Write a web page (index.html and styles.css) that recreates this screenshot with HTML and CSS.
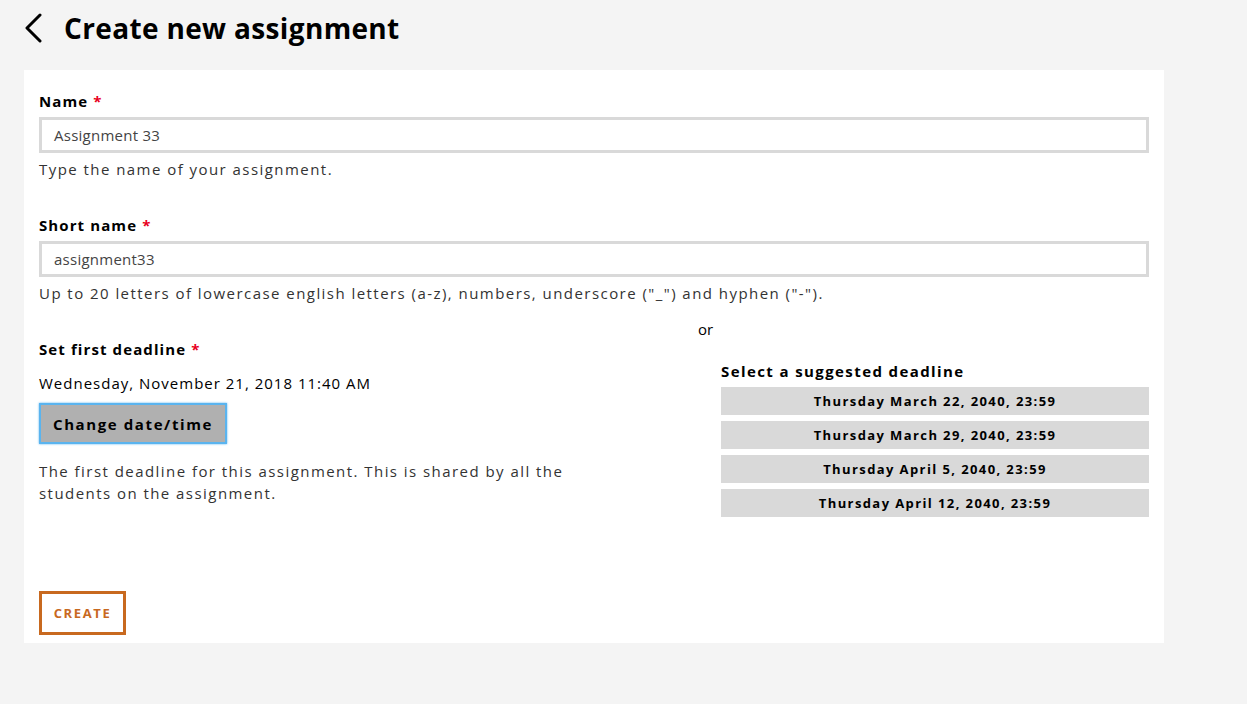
FILE: index.html
```html
<!DOCTYPE html>
<html>
<head>
<meta charset="utf-8">
<link rel="stylesheet" href="styles.css">
</head>
<body>
<header class="topbar">
  <svg class="back" width="20" height="30" viewBox="0 0 20 30"><path d="M16 2 L3 15 L16 28" fill="none" stroke="#000" stroke-width="3" stroke-linecap="round" stroke-linejoin="round"/></svg>
  <h1 class="title">Create new assignment</h1>
</header>
<main class="card">
  <div class="field">
    <label class="label">Name <span class="req">*</span></label>
    <div class="input">Assignment 33</div>
    <div class="help">Type the name of your assignment.</div>
  </div>
  <div class="field second">
    <label class="label">Short name <span class="req">*</span></label>
    <div class="input">assignment33</div>
    <div class="help">Up to 20 letters of lowercase english letters (a-z), numbers, underscore ("_") and hyphen ("-").</div>
  </div>
  <div class="deadline-row">
    <div class="left-col">
      <label class="label">Set first deadline <span class="req">*</span></label>
      <div class="date">Wednesday, November 21, 2018 11:40 AM</div>
      <button class="change">Change date/time</button>
      <div class="help wrap">The first deadline for this assignment. This is shared by all the students on the assignment.</div>
    </div>
    <div class="or">or</div>
    <div class="right-col">
      <div class="label suggest-title">Select a suggested deadline</div>
      <div class="suggest-list">
        <button class="suggest">Thursday March 22, 2040, 23:59</button>
        <button class="suggest">Thursday March 29, 2040, 23:59</button>
        <button class="suggest">Thursday April 5, 2040, 23:59</button>
        <button class="suggest">Thursday April 12, 2040, 23:59</button>
      </div>
    </div>
  </div>
  <button class="create">CREATE</button>
</main>
</body>
</html>
```
FILE: styles.css
```css
html, body {
  margin: 0;
  padding: 0;
  background: #f4f4f4;
  font-family: "Open Sans", "Noto Sans", sans-serif;
  color: #000;
}
.topbar {
  display: flex;
  align-items: center;
  height: 56px;
  padding-left: 24px;
}
.back {
  display: block;
}
.title {
  margin: 0 0 0 20px;
  font-size: 28px;
  font-weight: 700;
  letter-spacing: 0.35px;
  line-height: 56px;
}
.card {
  background: #fff;
  margin: 14px 0 0 24px;
  width: 1140px;
  box-sizing: border-box;
  padding: 20px 15px 8px;
}
.field {
  display: flex;
  flex-direction: column;
}
.field.second {
  margin-top: 34px;
}
.label {
  font-size: 15px;
  font-weight: 700;
  line-height: 22px;
  letter-spacing: 1.1px;
}
.suggest-title {
  letter-spacing: 1.4px;
}
.req {
  color: #e8001c;
}
.input {
  margin-top: 5px;
  height: 36px;
  box-sizing: border-box;
  border: 3px solid #d9d9d9;
  padding: 0 12px;
  font-size: 15px;
  line-height: 30px;
  color: #444;
  letter-spacing: 0.25px;
}
.help {
  margin-top: 5px;
  font-size: 15px;
  line-height: 22px;
  color: #333;
  letter-spacing: 1.45px;
}
.deadline-row {
  display: grid;
  grid-template-columns: 1fr 15px 428px;
  margin-top: 14px;
}
.left-col {
  padding-top: 20px;
  display: flex;
  flex-direction: column;
  align-items: flex-start;
}
.date {
  margin-top: 12px;
  font-size: 15px;
  line-height: 22px;
  letter-spacing: 1px;
}
.change {
  margin-top: 9px;
  height: 41px;
  padding: 0 12px;
  background: #b0b0b0;
  border: 2px solid #5ab4ef;
  box-shadow: 0 0 2px #5ab4ef;
  font-family: inherit;
  font-size: 15px;
  font-weight: 700;
  letter-spacing: 1.6px;
  color: #000;
}
.help.wrap {
  margin-top: 16px;
  max-width: 540px;
}
.or {
  font-size: 15px;
  line-height: 22px;
  margin-left: -8px;
}
.right-col {
  padding-top: 42px;
}
.suggest-list {
  margin-top: 5px;
  display: flex;
  flex-direction: column;
  gap: 6px;
}
.suggest {
  height: 28px;
  background: #d9d9d9;
  border: none;
  font-family: inherit;
  font-size: 13px;
  font-weight: 700;
  letter-spacing: 1.4px;
  color: #000;
}
.create {
  margin-top: 74px;
  height: 44px;
  width: 87px;
  background: #fff;
  border: 3px solid #c8691f;
  color: #c8691f;
  font-family: inherit;
  font-size: 13px;
  font-weight: 700;
  letter-spacing: 1.6px;
  padding: 0;
}
```
